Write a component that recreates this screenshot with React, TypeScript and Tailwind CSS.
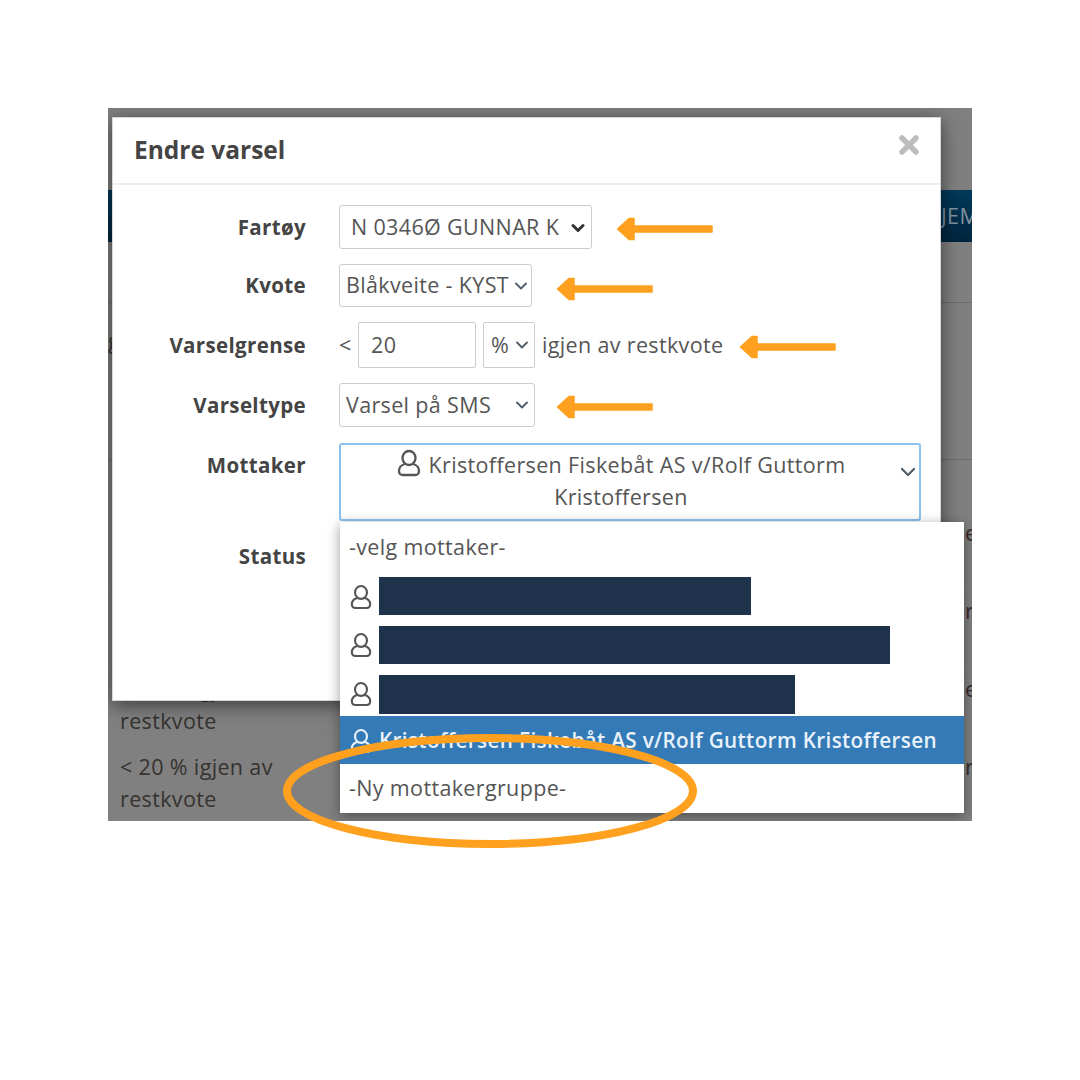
import React from "react";

const FONT = "font-['Open_Sans',sans-serif]";

function Chevron({ bold = false, large = false }: { bold?: boolean; large?: boolean }) {
  return (
    <svg width={large ? 18 : 14} height={large ? 12 : 10} viewBox="0 0 14 10" fill="none" className="shrink-0">
      <path d="M2 2.5 L7 7.5 L12 2.5" stroke={bold ? "#333" : "#4f5f6b"} strokeWidth={bold ? 3 : 1.9} strokeLinecap="round" strokeLinejoin="round" />
    </svg>
  );
}

function UserIcon({ color = "#555", className = "" }: { color?: string; className?: string }) {
  return (
    <svg width="24" height="28" viewBox="0 0 24 28" fill="none" className={className}>
      <ellipse cx="12" cy="9" rx="6.5" ry="7" stroke={color} strokeWidth="2.3" />
      <path d="M8 15 C4 16 2 19 2 22 C2 25 4 26 6 26 H18 C20 26 22 25 22 22 C22 19 20 16 16 15" stroke={color} strokeWidth="2.3" strokeLinecap="round" />
    </svg>
  );
}

function Arrow({ className }: { className: string }) {
  return (
    <svg width="97" height="26" viewBox="0 0 97 26" className={className}>
      <path d="M1.5 13 L13 2.5 L18 2.5 L18 10 L96 10 L96 16 L18 16 L18 23.5 L13 23.5 Z" fill="#ffa01f" stroke="#ffa01f" strokeWidth="1.5" strokeLinejoin="round" />
    </svg>
  );
}

function Label({ children }: { children: React.ReactNode }) {
  return <div className="w-[193px] shrink-0 text-right text-[20.5px] tracking-[0.35px] font-bold text-[#444]">{children}</div>;
}

function BgRow({ letter, first, second }: { letter: string; first?: string; second?: string }) {
  return (
    <div className="h-[78px] flex justify-between pl-[12px] pt-[8px] border-b border-[#848484]">
      <div className="leading-[32px] text-[#35322f]">
        {first}
        <br />
        {second}
      </div>
      <span className="-mr-[1px] text-[#3a2a2c] w-[8px] overflow-hidden">{letter}</span>
    </div>
  );
}

export default function App() {
  return (
    <div className={`${FONT} relative w-[1080px] h-[1080px] bg-white pt-[108px] pl-[108px] text-[21.5px] tracking-[0.35px] text-[#555] overflow-hidden`}>
      <div className="relative w-[864px] h-[713px] bg-[#808080] overflow-hidden flex flex-col">
        {/* dimmed page behind the dialog */}
        <div className="mt-[82px] h-[52px] shrink-0 bg-gradient-to-b from-[#003a5a] to-[#00263f] flex items-center justify-end text-[#8193a0] overflow-hidden">
          <span className="w-[31px] whitespace-nowrap overflow-hidden">JEM</span>
        </div>
        <div className="h-[61px] shrink-0 border-b border-[#6c6c6c]"></div>
        <div className="h-[157px] shrink-0 border-b border-[#6c6c6c] flex items-center">
          <span className="w-[4px] overflow-hidden text-[#33302e] -mt-[80px]">g</span>
        </div>
        <div className="mt-auto">
          <BgRow letter="e" />
          <BgRow letter="r" />
          <BgRow letter="e" first="< 20 % igjen av" second="restkvote" />
          <BgRow letter="r" first="< 20 % igjen av" second="restkvote" />
        </div>

        {/* dialog */}
        <div className="absolute left-[4px] top-[9px] w-[829px] h-[584px] bg-white shadow-[0_4px_18px_rgba(0,0,0,0.55)] border border-[#999]/40">
          <div className="h-[67px] border-b-2 border-[#eeeeee] flex items-center justify-between pl-[21px] pr-[20px]">
            <h1 className="text-[24.5px] font-bold tracking-normal text-[#444] leading-none">Endre varsel</h1>
            <svg width="22" height="22" viewBox="0 0 22 22" className="-mt-[12px]">
              <path d="M4 4 L18 18 M18 4 L4 18" stroke="#bdbdbd" strokeWidth="5.5" strokeLinecap="round" />
            </svg>
          </div>

          <div className="flex flex-col pt-[20px]">
            <div className="flex items-center gap-[33px] h-[44px]">
              <div className="pt-[1px]">
                <Label>Fartøy</Label>
              </div>
              <div className="w-[253px] h-[44px] border border-[#ccc] rounded-[3px] flex items-center justify-between pl-[11px] pr-[6px] pt-[1px] whitespace-nowrap overflow-hidden">
                <span className="overflow-hidden">N 0346Ø GUNNAR K</span>
                <Chevron bold />
              </div>
            </div>

            <div className="flex items-center gap-[33px] h-[43px] mt-[15px]">
              <Label>Kvote</Label>
              <div className="w-[193px] h-[43px] border border-[#ccc] rounded-[3px] flex items-center justify-between pl-[6px] pr-[3px] whitespace-nowrap">
                <span>Blåkveite - KYST</span>
                <Chevron />
              </div>
            </div>

            <div className="flex items-center gap-[33px] h-[46px] mt-[15px]">
              <Label>Varselgrense</Label>
              <div className="flex items-center">
                <span className="w-[19px] text-[#555]">&lt;</span>
                <div className="w-[118px] h-[46px] border border-[#ccc] rounded-[2px] flex items-center pl-[12px]">20</div>
                <div className="ml-[7px] w-[52px] h-[46px] border border-[#ccc] rounded-[2px] flex items-center justify-between pl-[7px] pr-[5px]">
                  <span>%</span>
                  <Chevron />
                </div>
                <span className="ml-[7px] whitespace-nowrap">igjen av restkvote</span>
              </div>
            </div>

            <div className="flex items-center gap-[33px] h-[44px] mt-[15px]">
              <Label>Varseltype</Label>
              <div className="w-[196px] h-[44px] border border-[#ccc] rounded-[3px] flex items-center justify-between pl-[6px] pr-[5px] whitespace-nowrap">
                <span>Varsel på SMS</span>
                <Chevron />
              </div>
            </div>

            <div className="flex items-start gap-[33px] mt-[16px]">
              <div className="pt-[7px]">
                <Label>Mottaker</Label>
              </div>
              <div className="w-[582px] h-[78px] border-2 border-[#8ec2ee] rounded-[3px] flex items-start pl-[10px] pr-[2px] pt-[4px]">
                <div className="flex-1 text-center leading-[32px]">
                  <UserIcon className="inline-block align-[-4px] mr-[8px]" />
                  Kristoffersen Fiskebåt AS v/Rolf Guttorm Kristoffersen
                </div>
                <div className="w-[26px] pt-[17px] pl-[8px]">
                  <Chevron large />
                </div>
              </div>
            </div>

            <div className="flex items-center gap-[33px] mt-[20px]">
              <Label>Status</Label>
            </div>
          </div>

          {/* open list of recipients */}
          <div className="absolute left-[227px] top-[404px] w-[624px] bg-white shadow-[0_3px_12px_rgba(0,0,0,0.4)] flex flex-col">
            <div className="h-[50px] flex items-center pl-[9px]">-velg mottaker-</div>
            <div className="h-[49px] flex items-start pt-[5px] pl-[10px] gap-[7px]">
              <UserIcon className="shrink-0 w-[22px] h-[26px] mt-[7px]" />
              <div className="h-[38px] w-[372px] bg-[#1f324c]"></div>
            </div>
            <div className="h-[49px] flex items-start pt-[5px] pl-[10px] gap-[7px]">
              <UserIcon className="shrink-0 w-[22px] h-[26px] mt-[6px]" />
              <div className="h-[38px] w-[511px] bg-[#1f324c]"></div>
            </div>
            <div className="h-[46px] flex items-start pt-[5px] pl-[10px] gap-[7px]">
              <UserIcon className="shrink-0 w-[22px] h-[26px] mt-[6px]" />
              <div className="h-[39px] w-[416px] bg-[#1f324c]"></div>
            </div>
            <div className="h-[48px] bg-[#337ab7] flex items-center pl-[10px] pt-[2px] gap-[7px] text-[20.7px] text-[#e9f2fa] font-semibold whitespace-nowrap">
              <UserIcon color="#e9f2fa" className="shrink-0 w-[22px] h-[26px]" />
              <span>Kristoffersen Fiskebåt AS v/Rolf Guttorm Kristoffersen</span>
            </div>
            <div className="h-[49px] flex items-center pl-[9px]">-Ny mottakergruppe-</div>
          </div>
        </div>
      </div>

      {/* orange annotations */}
      <Arrow className="absolute left-[616px] top-[216px]" />
      <Arrow className="absolute left-[556px] top-[276px]" />
      <Arrow className="absolute left-[739px] top-[334px]" />
      <Arrow className="absolute left-[556px] top-[394px]" />
      <svg width="420" height="120" viewBox="0 0 420 120" className="absolute left-[280px] top-[732px]">
        <ellipse cx="210" cy="59" rx="203" ry="53" fill="none" stroke="#ffa01f" strokeWidth="8" />
      </svg>
    </div>
  );
}
